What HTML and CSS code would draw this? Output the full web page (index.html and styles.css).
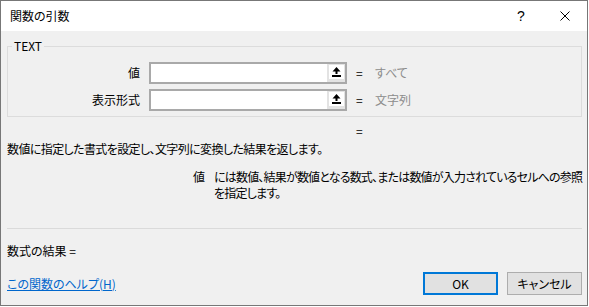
FILE: index.html
```html
<!DOCTYPE html>
<html lang="ja">
<head>
    <meta charset="UTF-8">
    <meta name="viewport" content="width=device-width, initial-scale=1.0">
    <title>関数の引数</title>
    <link rel="stylesheet" href="styles.css">
</head>
<body>
    <div class="dialog">
        <div class="titlebar">
            <span class="title">関数の引数</span>
            <span class="tb-btn help-btn">?</span>
            <span class="tb-btn close-btn">
                <svg width="10" height="10" viewBox="0 0 10 10"><path d="M0.5 0.5 L9.5 9.5 M9.5 0.5 L0.5 9.5" stroke="#000" stroke-width="1" fill="none"/></svg>
            </span>
        </div>

        <div class="content">
            <fieldset class="args">
                <legend>TEXT</legend>
                <div class="arg-grid">
                    <span class="arg-label">値</span>
                    <div class="ref-input">
                        <span class="collapse">
                            <svg width="9" height="10" viewBox="0 0 9 10"><path d="M4.5 0 L8.5 4.5 H5.5 V7 H3.5 V4.5 H0.5 Z" fill="#000"/><rect x="0" y="8" width="9" height="2" fill="#000"/></svg>
                        </span>
                    </div>
                    <span class="eq">=</span>
                    <span class="arg-value">すべて</span>

                    <span class="arg-label">表示形式</span>
                    <div class="ref-input">
                        <span class="collapse">
                            <svg width="9" height="10" viewBox="0 0 9 10"><path d="M4.5 0 L8.5 4.5 H5.5 V7 H3.5 V4.5 H0.5 Z" fill="#000"/><rect x="0" y="8" width="9" height="2" fill="#000"/></svg>
                        </span>
                    </div>
                    <span class="eq">=</span>
                    <span class="arg-value">文字列</span>
                </div>
            </fieldset>

            <div class="eq-line">=</div>
            <p class="summary">数値に指定した書式を設定し、文字列に変換した結果を返します。</p>

            <div class="arg-help">
                <span class="help-name">値</span>
                <span class="help-text">には数値、結果が数値となる数式、または数値が入力されているセルへの参照<br>を指定します。</span>
            </div>

            <hr class="sep">

            <div class="result">数式の結果 =</div>

            <div class="footer">
                <a class="help-link" href="#">この関数のヘルプ(H)</a>
                <div class="buttons">
                    <button class="btn btn-ok">OK</button>
                    <button class="btn">キャンセル</button>
                </div>
            </div>
        </div>
    </div>
</body>
</html>
```

FILE: styles.css
```css
body {
    margin: 0;
    font-family: "Noto Sans CJK JP", "Noto Sans", sans-serif;
    font-size: 12px;
    line-height: 16px;
    color: #000;
    background-color: #fff;
    font-feature-settings: "palt";
}

.dialog {
    width: 588px;
    height: 306px;
    box-sizing: border-box;
    border: 1px solid #777;
    background-color: #f0f0f0;
    display: flex;
    flex-direction: column;
    overflow: hidden;
}

.titlebar {
    height: 30px;
    flex-shrink: 0;
    background-color: #fff;
    display: flex;
    align-items: center;
}

.title {
    flex: 1;
    padding-left: 9px;
}

.tb-btn {
    width: 44px;
    height: 30px;
    display: flex;
    align-items: center;
    justify-content: center;
}

.help-btn {
    font-family: "Liberation Sans", sans-serif;
    font-size: 14px;
}

.content {
    flex: 1;
    padding: 0 5px 0 6px;
    display: flex;
    flex-direction: column;
}

.args {
    margin: 7px 0 0;
    padding: 8px 0 5px;
    border: 1px solid #dcdcdc;
    min-width: 0;
}

.args legend {
    margin-left: 4px;
    padding: 0 2px;
    line-height: 16px;
}

.arg-grid {
    display: grid;
    grid-template-columns: 141px 198px 28px 1fr;
    row-gap: 5px;
    align-items: center;
}

.arg-label {
    text-align: right;
    padding-right: 9px;
}

.ref-input {
    height: 22px;
    box-sizing: border-box;
    border: 2px solid #a9a9a9;
    background-color: #fff;
    display: flex;
    justify-content: flex-end;
}

.collapse {
    width: 18px;
    box-sizing: border-box;
    background-color: #fff;
    border-left: 2px solid #e3e3e3;
    border-bottom: 3px solid #e3e3e3;
    border-top: 1px solid #e3e3e3;
    border-right: 1px solid #e3e3e3;
    display: flex;
    align-items: center;
    justify-content: center;
}

.eq {
    padding-left: 9px;
}

.arg-value {
    color: #8c8c8c;
}

.eq-line {
    margin: 6px 0 0 349px;
}

.summary {
    margin: 2px 0 0;
    letter-spacing: -0.6px;
}

.arg-help {
    margin: 12px 0 0 186px;
    display: flex;
    gap: 9px;
}

.help-text {
    white-space: nowrap;
    letter-spacing: -0.8px;
}

.sep {
    margin: 27px 0 0;
    border: 0;
    border-top: 1px solid #dadada;
    height: 0;
}

.result {
    margin-top: 14px;
}

.footer {
    margin-top: 13px;
    display: flex;
    align-items: center;
    justify-content: space-between;
}

.help-link {
    color: #0066cc;
    text-decoration: underline;
}

.buttons {
    display: flex;
    gap: 9px;
}

.btn {
    width: 75px;
    height: 23px;
    box-sizing: border-box;
    border: 1px solid #adadad;
    background-color: #e1e1e1;
    font: inherit;
    color: #000;
    padding: 0;
}

.btn-ok {
    border: 2px solid #0078d7;
}
```
